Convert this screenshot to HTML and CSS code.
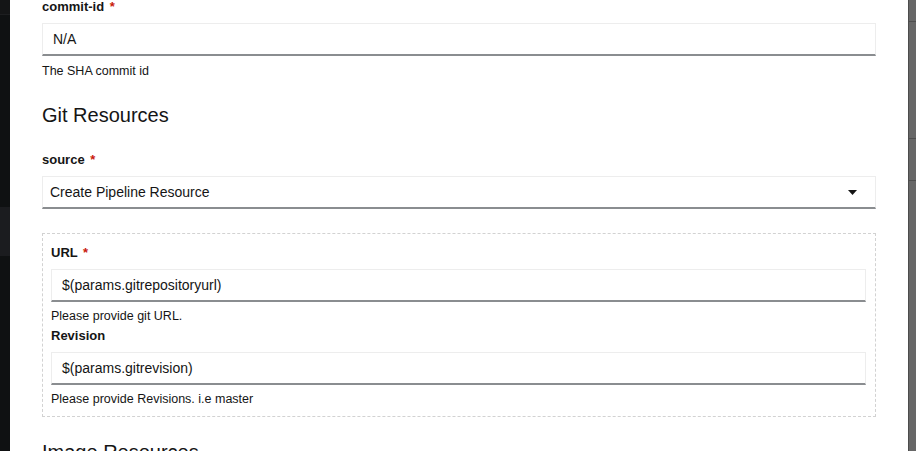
FILE: index.html
```html
<!DOCTYPE html>
<html>
<head>
<meta charset="utf-8">
<link rel="stylesheet" href="styles.css">
</head>
<body>
<div class="page">
  <div class="backdrop-left">
    <div class="bl-top"></div>
    <div class="bl-mid"></div>
    <div class="bl-band"></div>
    <div class="bl-rest"></div>
  </div>
  <div class="modal">
    <form class="form">
      <div class="group">
        <label class="label">commit-id <span class="req">*</span></label>
        <div class="input">N/A</div>
        <div class="helper">The SHA commit id</div>
      </div>
      <h2 class="section-title">Git Resources</h2>
      <div class="group">
        <label class="label">source <span class="req">*</span></label>
        <div class="input select">
          <span>Create Pipeline Resource</span>
          <svg class="caret" width="9" height="5" viewBox="0 0 9 5"><path d="M0 0 H9 L4.5 5 Z" fill="#151515"/></svg>
        </div>
      </div>
      <div class="dashed">
        <div class="group tight">
          <label class="label">URL <span class="req">*</span></label>
          <div class="input">$(params.gitrepositoryurl)</div>
          <div class="helper">Please provide git URL.</div>
        </div>
        <div class="group tight">
          <label class="label">Revision</label>
          <div class="input">$(params.gitrevision)</div>
          <div class="helper">Please provide Revisions. i.e master</div>
        </div>
      </div>
      <h2 class="section-title">Image Resources</h2>
    </form>
  </div>
  <div class="backdrop-right">
    <div class="br-seg s1"></div>
    <div class="br-seg s2"></div>
    <div class="br-seg s3"></div>
    <div class="br-seg s4"></div>
  </div>
</div>
</body>
</html>
```
FILE: styles.css
```css
html, body {
  margin: 0;
  padding: 0;
  height: 100%;
  overflow: hidden;
  background: #0f1112;
}
.page {
  display: flex;
  height: 451px;
  font-family: "Liberation Sans", Arial, sans-serif;
  color: #151515;
}
.backdrop-left {
  width: 10px;
  display: flex;
  flex-direction: column;
  background: #0f1112;
}
.bl-top { height: 14px; background: #141516; border-bottom: 1px solid #1d1e20; }
.bl-mid { height: 192px; }
.bl-band { height: 49px; background: #1b1c1f; }
.bl-rest { flex: 1; }
.modal {
  flex: 1;
  background: #ffffff;
  padding: 0 32px;
  overflow: hidden;
}
.backdrop-right {
  width: 8px;
  background: #676767;
  border-left: 1px solid #4c4c4c;
  box-sizing: border-box;
  display: flex;
  flex-direction: column;
}
.br-seg { border-top: 1px solid #4e4e4e; }
.s1 { height: 21px; border-top: none; }
.s2 { height: 116px; }
.s3 { height: 41px; }
.s4 { flex: 1; }
.form {
  margin-top: -3px;
}
.group {
  display: flex;
  flex-direction: column;
}
.label {
  font-size: 13px;
  font-weight: 700;
  line-height: 20px;
  margin-bottom: 6px;
}
.req {
  color: #c9190b;
  margin-left: 2px;
}
.input {
  height: 33px;
  box-sizing: border-box;
  border: 1px solid #ededed;
  border-bottom: 2px solid #8a8d90;
  padding: 0 10px;
  font-size: 14px;
  line-height: 30px;
  display: flex;
  align-items: center;
}
.select {
  justify-content: space-between;
  padding: 0 18px 0 7px;
}
.caret { display: block; margin-top: 1px; }
.helper {
  font-size: 12.5px;
  line-height: 16px;
  margin-top: 7px;
}
.section-title {
  font-size: 20px;
  font-weight: 400;
  line-height: 26px;
  margin: 23px 0 22px;
}
.dashed {
  margin-top: 24px;
  border: 1px dashed #d2d2d2;
  padding: 9px 9px 9px 8px;
  display: flex;
  flex-direction: column;
  gap: 2px;
}
.tight .label { margin-bottom: 6px; }
.tight .helper { margin-top: 6px; }
.dashed + .section-title { margin-top: 22px; }
```
